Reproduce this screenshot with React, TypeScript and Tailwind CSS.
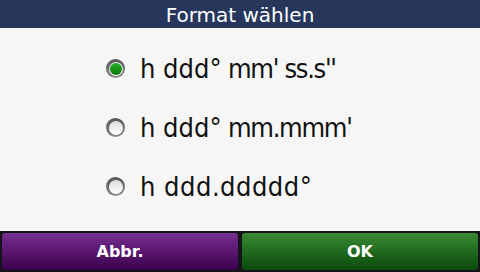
import React from "react";

function Radio({ checked }: { checked?: boolean }) {
  return (
    <div className="w-[19px] h-[19px] rounded-full bg-gradient-to-b from-[#555] to-[#8a8a8a] flex items-center justify-center shrink-0">
      <div className="w-[14px] h-[14px] rounded-full bg-gradient-to-b from-[#dcdcdc] to-[#ffffff] flex items-center justify-center">
        {checked && <div className="w-[12px] h-[12px] rounded-full bg-gradient-to-b from-[#25b025] to-[#087808]" />}
      </div>
    </div>
  );
}

export default function App() {
  const rows = [
    { a: "h ddd°", b: " mm' ss.s''", c: true },
    { a: "h ddd°", b: " mm.mmm'", c: false },
    { a: "h ddd.ddddd°", b: "", c: false },
  ];
  return (
    <div className="w-[480px] h-[272px] flex flex-col bg-[#f6f6f6] overflow-hidden font-['DejaVu_Sans',sans-serif]">
      <div className="h-[28px] bg-[#27375c] flex items-center justify-center text-white text-[20px] leading-none shrink-0 pt-[1px]">
        Format wählen
      </div>
      <div className="flex-1 flex flex-col justify-center gap-[31px] pl-[106px] pb-[4px]">
        {rows.map((r) => (
          <div key={r.a + r.b} className="flex items-center gap-[15px] h-[28px]">
            <Radio checked={r.c} />
            <span className="font-['DejaVu_Sans_Condensed','DejaVu_Sans',sans-serif] font-stretch-condensed text-[27px] leading-none text-[#111] whitespace-pre">
              <span className={r.b ? "" : "tracking-[0.5px]"}>{r.a}</span>
              <span className="tracking-[-1.3px]">{r.b}</span>
            </span>
          </div>
        ))}
      </div>
      <div className="h-[41px] flex shrink-0 bg-[#14141a]">
        <div className="w-[240px] h-full p-[2px]">
          <div className="w-full h-full rounded-[3px] bg-gradient-to-b from-[#74308f] via-[#5a1670] to-[#3b034c] flex items-center justify-center text-white font-bold text-[16px]">
            Abbr.
          </div>
        </div>
        <div className="w-[240px] h-full p-[2px]">
          <div className="w-full h-full rounded-[3px] bg-gradient-to-b from-[#3a8a36] via-[#1f6a1e] to-[#0c4a0c] flex items-center justify-center text-white font-bold text-[16px]">
            OK
          </div>
        </div>
      </div>
    </div>
  );
}
